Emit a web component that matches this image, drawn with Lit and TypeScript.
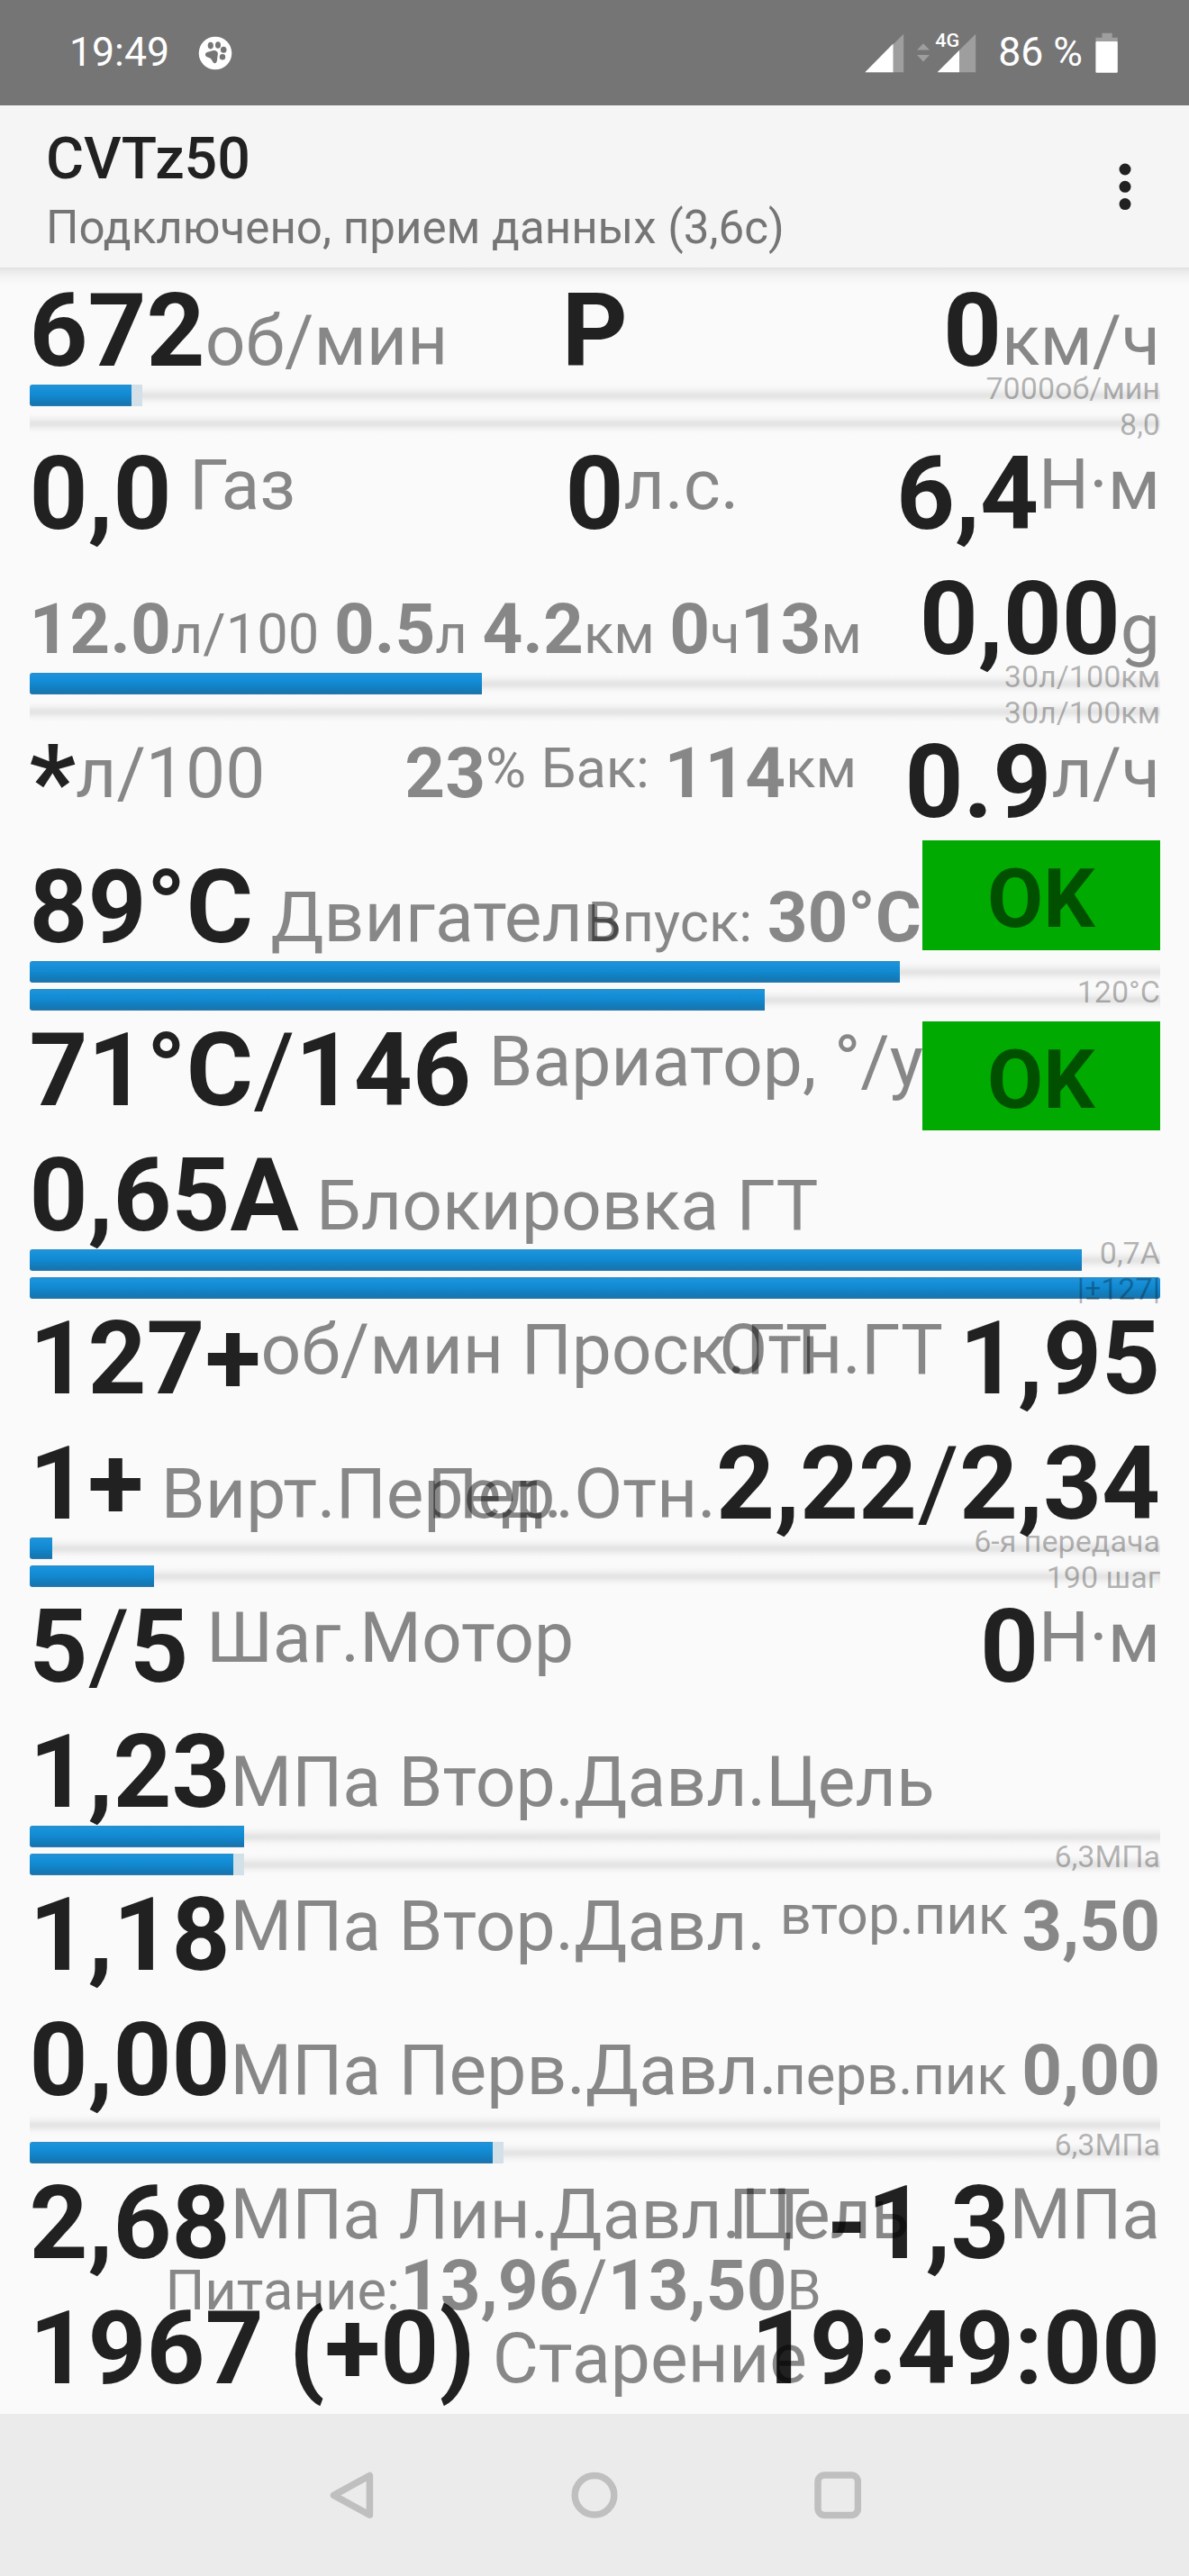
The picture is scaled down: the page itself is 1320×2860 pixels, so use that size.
import { LitElement, html, css, nothing } from "lit";
import { customElement, property } from "lit/decorators.js";
import { classMap } from "lit/directives/class-map.js";

type Seg = [kind: string, text: string];
interface Item {
  segs: Seg[];
  pos?: string;
}
interface Bar {
  end: number;
  buffer?: number;
}
interface Group {
  a: Item[];
  b: Item[];
  bars: [Bar, Bar];
  scale: [pos: string, text: string][];
  okA?: boolean;
  okB?: boolean;
}

/* Segment kinds: big/med are bold, lab/sm are regular; "-t" variants are top aligned,
   "thin" is a light separator between bold values. */
const GROUPS: Group[] = [
  {
    a: [
      { segs: [["big", "672"], ["lab", "об/мин"]] },
      { segs: [["big", "P"]], pos: "center" },
      { segs: [["big", "0"], ["lab", "км/ч"]], pos: "right" },
    ],
    bars: [{ end: 113.5, buffer: 125.5 }, { end: 0 }],
    scale: [["hi", "7000об/мин"], ["lo", "8,0"]],
    b: [
      { segs: [["big", "0,0"], ["lab-t", " Газ"]] },
      { segs: [["big", "0"], ["lab-t", "л.с."]], pos: "power" },
      { segs: [["big", "6,4"], ["lab-t", "Н·м"]], pos: "right" },
    ],
  },
  {
    a: [
      {
        segs: [
          ["med", "12.0"], ["sm", "л/100 "], ["med", "0.5"], ["sm", "л "],
          ["med", "4.2"], ["sm", "км "], ["med", "0"], ["sm", "ч"], ["med", "13"], ["sm", "м"],
        ],
      },
      { segs: [["big", "0,00"], ["lab", "g"]], pos: "right" },
    ],
    bars: [{ end: 502 }, { end: 0 }],
    scale: [["hi", "30л/100км"], ["lo", "30л/100км"]],
    b: [
      { segs: [["big", "*"], ["lab-t", "л/100"]] },
      { segs: [["med-t", "23"], ["sm-t", "% Бак: "], ["med-t", "114"], ["sm-t", "км"]], pos: "tank" },
      { segs: [["big", "0.9"], ["lab-t", "л/ч"]], pos: "right" },
    ],
  },
  {
    a: [
      { segs: [["big", "89°C"], ["lab", " Двигатель"]] },
      { segs: [["sm", "Впуск: "], ["med", "30°C"]], pos: "intake" },
    ],
    okA: true,
    bars: [{ end: 966.7 }, { end: 816.5 }],
    scale: [["mid", "120°C"]],
    b: [{ segs: [["big", "71°C"], ["big thin", "/"], ["big", "146"], ["lab-t", " Вариатор, °/у"]] }],
    okB: true,
  },
  {
    a: [{ segs: [["big", "0,65A"], ["lab", " Блокировка ГТ"]] }],
    bars: [{ end: 1168 }, { end: 1255.5 }],
    scale: [["hi", "0,7A"], ["lo", "|±127|"]],
    b: [
      { segs: [["big", "127+"], ["lab-t", "об/мин Проск.ГТ"]] },
      { segs: [["lab-t", "Отн.ГТ "], ["big", "1,95"]], pos: "right" },
    ],
  },
  {
    a: [
      { segs: [["big", "1+"], ["lab", " Вирт.Перед."]] },
      { segs: [["lab", "Пер.Отн."], ["big", "2,22"], ["big thin", "/"], ["big", "2,34"]], pos: "right" },
    ],
    bars: [{ end: 25.3 }, { end: 138 }],
    scale: [["hi", "6-я передача"], ["lo", "190 шаг"]],
    b: [
      { segs: [["big", "5"], ["big thin", "/"], ["big", "5"], ["lab-t", " Шаг.Мотор"]] },
      { segs: [["big", "0"], ["lab-t", "Н·м"]], pos: "right" },
    ],
  },
  {
    a: [{ segs: [["big", "1,23"], ["lab", "МПа Втор.Давл.Цель"]] }],
    bars: [{ end: 238.6 }, { end: 226, buffer: 238.6 }],
    scale: [["mid", "6,3МПа"]],
    b: [
      { segs: [["big", "1,18"], ["lab-t", "МПа Втор.Давл."]] },
      { segs: [["sm-tt", "втор.пик "], ["med-t", "3,50"]], pos: "right" },
    ],
  },
  {
    a: [
      { segs: [["big", "0,00"], ["lab", "МПа Перв.Давл."]] },
      { segs: [["sm", "перв.пик "], ["med", "0,00"]], pos: "right" },
    ],
    bars: [{ end: 0 }, { end: 514.7, buffer: 527 }],
    scale: [["mid", "6,3МПа"]],
    b: [
      { segs: [["big", "2,68"], ["lab-t", "МПа Лин.Давл.Цель"]] },
      { segs: [["lab-t", "ГТ "], ["big", "-1,3"], ["lab-t", "МПа"]], pos: "right" },
      { segs: [["sm", "Питание:"], ["med", "13,96"], ["med thin", "/"], ["med", "13,50"], ["sm", "В"]], pos: "supply" },
    ],
  },
];

const LAST: Item[] = [
  { segs: [["big", "1967 (+0)"], ["lab", " Старение"]] },
  { segs: [["big", "19:49:00"]], pos: "right" },
];

@customElement("gauge-line")
class GaugeLine extends LitElement {
  @property({ attribute: false }) items: Item[] = [];
  @property({ type: Boolean }) ok = false;

  static styles = css`
    :host {
      display: grid;
      grid-template-columns: 100%;
      align-items: start;
      line-height: 0;
      white-space: pre;
    }
    .item,
    .ok {
      grid-area: 1 / 1;
      justify-self: start;
    }
    .item::before,
    .ok::before {
      content: "";
      display: inline-block;
      height: var(--baseline);
    }
    .center { justify-self: center; }
    .right { justify-self: end; }
    .power { padding-left: 595px; }
    .tank { justify-self: end; padding-right: 337px; }
    .intake { justify-self: end; padding-right: 265px; }
    .supply { padding-left: 151px; }
    .supply::before { height: 163px; }
    .big {
      font-size: 113.4px;
      font-weight: 700;
      color: rgba(0, 0, 0, 0.87);
    }
    .lab, .lab-t, .med, .med-t, .sm, .sm-t, .sm-tt { color: rgba(0, 0, 0, 0.46); }
    .lab, .lab-t { font-size: 78.6px; }
    .med, .med-t { font-size: 78.2px; font-weight: 700; }
    .sm, .sm-t, .sm-tt { font-size: 61.5px; }
    .sm, .sm-t { word-spacing: 1.3px; }
    .lab, .med, .sm { vertical-align: 1px; }
    .lab-t, .med-t { vertical-align: 22px; }
    .sm-t { vertical-align: 33px; }
    .sm-tt { vertical-align: 40px; }
    .thin { font-weight: 400; }
    .ok {
      justify-self: end;
      width: 264.5px;
      height: 121.5px;
      margin-top: var(--badge-top);
      background: #00aa00;
      text-align: center;
      font-size: 90px;
      font-weight: 700;
      color: rgba(0, 0, 0, 0.53);
    }
    .ok::before { height: 96px; }
  `;

  render() {
    return html`${this.items.map(
      (it) =>
        html`<div class=${classMap({ item: true, [it.pos ?? "left"]: true })}>${it.segs.map(
          ([k, t]) => html`<span class=${k}>${t}</span>`
        )}</div>`
    )}${this.ok ? html`<div class="ok">OK</div>` : nothing}`;
  }
}

@customElement("gauge-bars")
class GaugeBars extends LitElement {
  @property({ attribute: false }) bars: Bar[] = [];
  @property({ attribute: false }) scale: [string, string][] = [];

  static styles = css`
    :host {
      display: grid;
      grid-template-columns: 100%;
      align-items: start;
    }
    .stack {
      grid-area: 1 / 1;
      display: flex;
      flex-direction: column;
      gap: 6.5px;
    }
    .track {
      display: flex;
      height: 24px;
      background: linear-gradient(
        #fafafa 0%, #f8f8f8 12%, #f0f0f0 30%, #e5e5e5 45%, #e5e5e5 58%, #f0f0f0 72%, #f8f8f8 88%, #fafafa 100%
      );
    }
    .fill {
      height: 24px;
      border-radius: 3px 0 0 3px;
      background: linear-gradient(#2a8ec9 0, #1a93dc 3px, #128ad2 11px, #127dbd 18px, #1a73ac 23px, #4288b0 24px);
    }
    .full { border-radius: 3px; }
    .buffer { height: 24px; background: #d3e0e8; }
    .scale {
      grid-area: 1 / 1;
      justify-self: end;
      line-height: 0;
      white-space: pre;
      font-size: 34.1px;
      color: rgba(0, 0, 0, 0.29);
    }
    .scale::before { content: ""; display: inline-block; }
    .hi::before { height: 15.5px; }
    .mid::before { height: 45.5px; }
    .lo::before { height: 55.5px; }
  `;

  render() {
    return html`
      <div class="stack">
        ${this.bars.map(
          (b) => html`<div class="track">
            ${b.end
              ? html`<div class=${classMap({ fill: true, full: b.end > 1250 })} style="width:${b.end}px"></div>`
              : nothing}
            ${b.buffer ? html`<div class="buffer" style="width:${b.buffer - b.end}px"></div>` : nothing}
          </div>`
        )}
      </div>
      ${this.scale.map(([pos, t]) => html`<div class="scale ${pos}">${t}</div>`)}
    `;
  }
}

@customElement("app-root")
class AppRoot extends LitElement {
  static styles = css`
    :host {
      display: flex;
      flex-direction: column;
      width: 1320px;
      height: 2860px;
      overflow: hidden;
      background: #fafafa;
      font-family: Roboto, "Noto Sans", sans-serif;
    }
    .status {
      flex: none;
      display: flex;
      box-sizing: border-box;
      height: 117px;
      padding: 0 79px 0 77px;
      background: #757575;
      color: #fff;
      font-size: 44.6px;
      line-height: 117px;
      white-space: pre;
    }
    .paw { margin-left: 32px; }
    .signals { margin-left: auto; }
    .percent { margin-left: 22px; }
    .battery { margin-left: 14px; }
    svg { display: block; flex: none; }
    .header {
      flex: none;
      display: flex;
      justify-content: space-between;
      box-sizing: border-box;
      height: 180px;
      padding: 26px 64px 0 51px;
      background: #f5f5f5;
      white-space: nowrap;
      z-index: 1;
    }
    .title {
      font-size: 64.5px;
      line-height: 66px;
      font-weight: 500;
      color: #212121;
    }
    .sub {
      margin-top: 14px;
      font-size: 51.1px;
      line-height: 60px;
      color: #757575;
    }
    .shadow {
      flex: none;
      height: 20px;
      margin-bottom: -17px;
      background: linear-gradient(#e1e1e1, #eaeaea 4px, #f3f3f3 10px, #fafafa);
    }
    .groups {
      flex: 1;
      padding: 0 32px 0 32.5px;
    }
    .group {
      display: grid;
      grid-template-rows: 127px 54.5px 138.5px;
      grid-template-columns: 100%;
      height: 320px;
    }
    .line-a { --baseline: 106px; --badge-top: -7px; }
    .line-b { --baseline: 105px; --badge-top: 12px; }
    .nav {
      flex: none;
      display: flex;
      justify-content: center;
      align-items: center;
      gap: 218px;
      height: 180px;
      background: #ebebeb;
    }
  `;

  render() {
    return html`
      <div class="status">
        <span>19:49</span>
        <svg class="paw" width="38" height="117" viewBox="220 0 38 117">
          <circle cx="239" cy="59" r="18.3" fill="#fff" />
          <g fill="#757575">
            <ellipse cx="233.8" cy="50.6" rx="3.1" ry="3.8" />
            <ellipse cx="242" cy="50" rx="3" ry="3.8" />
            <ellipse cx="248.2" cy="55.3" rx="3.3" ry="3.5" />
            <ellipse cx="247" cy="63.3" rx="3.2" ry="3.3" />
            <path d="M228 60.5c.6-3 3-2.600 5.500-3.500 3-1.300 6-1.600 7.700.6 1.500 2.200.2 4.200 0 7 0 3-.8 6-3 5.600-2.500-.4-2.500-4.200-5-5.600-2.600-1.400-5.600-1.400-5.200-4.100z" />
          </g>
        </svg>
        <svg class="signals" width="128" height="117" viewBox="957 0 128 117">
          <path d="M959.300 80.300L1002.200 37.700V80.300Z" fill="#9e9e9e" />
          <path d="M959.300 80.300L990.500 48.500V80.300Z" fill="#fff" />
          <path d="M1024 48.300l7 7.200h-14zM1024 68.500l7-7.600h-14z" fill="#9e9e9e" />
          <path d="M1064 55.800L1082.200 37.700V80.300H1064Z" fill="#9e9e9e" />
          <path d="M1039.600 80.300L1064 55.800V80.300Z" fill="#fff" />
          <text x="1037.300" y="51.800" font-size="20" font-weight="500" textLength="27" lengthAdjust="spacingAndGlyphs" fill="#fff">4G</text>
        </svg>
        <span class="percent">86 %</span>
        <svg class="battery" width="25" height="117" viewBox="1216 0 25 117">
          <path d="M1216.400 46.500V41.700H1223.500V36.700H1234.700V41.700H1240.800V46.500Z" fill="#9e9e9e" />
          <rect x="1216.400" y="46" width="24.400" height="34.700" rx="1" fill="#fff" />
        </svg>
      </div>
      <div class="header">
        <div>
          <div class="title">CVTz50</div>
          <div class="sub">Подключено, прием данных (3,6с)</div>
        </div>
        <svg width="14" height="140" viewBox="0 143 14 140" fill="#212121">
          <circle cx="7" cy="188" r="6.500" />
          <circle cx="7" cy="207.300" r="6.500" />
          <circle cx="7" cy="226.600" r="6.500" />
        </svg>
      </div>
      <div class="shadow"></div>
      <div class="groups">
        ${GROUPS.map(
          (g) => html`<div class="group">
            <gauge-line class="line-a" .items=${g.a} ?ok=${g.okA}></gauge-line>
            <gauge-bars .bars=${g.bars} .scale=${g.scale}></gauge-bars>
            <gauge-line class="line-b" .items=${g.b} ?ok=${g.okB}></gauge-line>
          </div>`
        )}
        <gauge-line class="line-a" .items=${LAST}></gauge-line>
      </div>
      <div class="nav">
        <svg width="52" height="56" viewBox="364 2742 52 56" fill="none" stroke="#bfbfbf" stroke-width="7.500" stroke-linejoin="round">
          <path d="M370.500 2770.400L410.400 2748.500V2792.300Z" />
        </svg>
        <svg width="52" height="56" viewBox="0 0 52 56" fill="none" stroke="#bfbfbf" stroke-width="7.500">
          <circle cx="26" cy="28.200" r="21.800" />
        </svg>
        <svg width="52" height="56" viewBox="0 0 52 56" fill="none" stroke="#bfbfbf" stroke-width="7.500">
          <rect x="4" y="6" width="44.500" height="44.500" rx="7.500" />
        </svg>
      </div>
    `;
  }
}
